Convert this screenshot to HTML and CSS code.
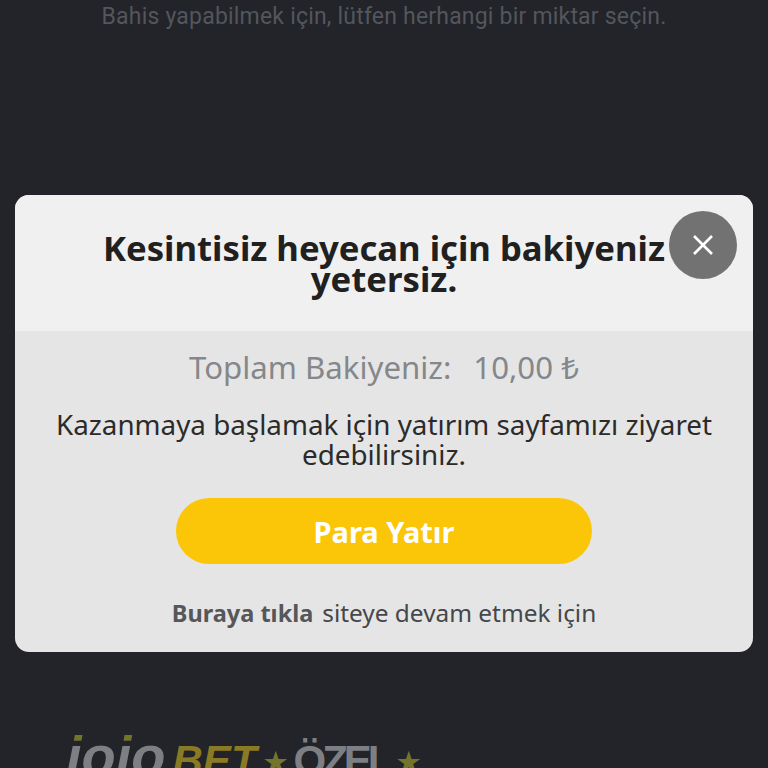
FILE: index.html

```html
<!DOCTYPE html>
<html lang="tr">
<head>
    <meta charset="UTF-8">
    <meta name="viewport" content="width=device-width, initial-scale=1.0">
    <title>Bakiye</title>
    <link rel="stylesheet" href="styles.css">
</head>
<body>
    <p class="hint">Bahis yapabilmek için, lütfen herhangi bir miktar seçin.</p>
    <div class="modal">
        <div class="modal-head">
            <h2>Kesintisiz heyecan için bakiyeniz yetersiz.</h2>
            <button class="close" type="button" aria-label="Kapat">
                <svg width="22" height="22" viewBox="0 0 22 22">
                    <path d="M2 2 L20 20 M20 2 L2 20" stroke="#fff" stroke-width="2.6" fill="none"/>
                </svg>
            </button>
        </div>
        <div class="modal-body">
            <div class="balance"><span>Toplam Bakiyeniz:</span><span>10,00 ₺</span></div>
            <p class="message">Kazanmaya başlamak için yatırım sayfamızı ziyaret edebilirsiniz.</p>
            <a class="deposit" href="#">Para Yatır</a>
            <p class="skip"><b>Buraya tıkla</b><span>siteye devam etmek için</span></p>
        </div>
    </div>
    <div class="logo">
        <span class="logo-jojo">jojo</span>
        <span class="logo-gold">BET</span>
        <span class="star">★</span>
        <span class="logo-ozel">ÖZEL</span>
        <span class="star">★</span>
    </div>
</body>
</html>
```

FILE: styles.css

```css
html, body {
    height: 768px;
    overflow: hidden;
}
body {
    background-color: #222429;
    font-family: "Noto Sans", sans-serif;
    margin: 0;
    display: flex;
    flex-direction: column;
    align-items: center;
}
.hint {
    font-family: Roboto, sans-serif;
    font-size: 23px;
    line-height: 30px;
    color: #53565c;
    margin: 0;
    height: 195px;
    flex-shrink: 0;
    padding-top: 2px;
    box-sizing: border-box;
    letter-spacing: 0.2px;
}
.modal {
    width: 738px;
    height: 457px;
    border-radius: 14px;
    overflow: hidden;
    background-color: #e5e5e5;
    display: flex;
    flex-direction: column;
    flex-shrink: 0;
}
.modal-head {
    position: relative;
    height: 136px;
    box-sizing: border-box;
    background-color: #f0f0f0;
    padding: 37px 60px 0;
}
.modal-head h2 {
    margin: 0;
    font-size: 34.7px;
    line-height: 31px;
    font-weight: 700;
    color: #202020;
    text-align: center;
}
.close {
    position: absolute;
    top: 16px;
    right: 16px;
    width: 68px;
    height: 68px;
    border: 0;
    border-radius: 50%;
    background-color: #727272;
    display: flex;
    align-items: center;
    justify-content: center;
    padding: 0;
}
.modal-body {
    display: flex;
    flex-direction: column;
    align-items: center;
    padding-top: 14px;
}
.balance {
    display: flex;
    gap: 22px;
    font-size: 31.2px;
    line-height: 44px;
    color: #85878a;
}
.message {
    margin: 20px 0 0;
    padding: 0 30px;
    font-size: 27.8px;
    line-height: 30px;
    color: #2b2b2b;
    text-align: center;
}
.deposit {
    margin-top: 29px;
    width: 416px;
    height: 66px;
    border-radius: 33px;
    background-color: #fbc508;
    color: #fff;
    font-size: 29px;
    font-weight: 700;
    display: flex;
    align-items: center;
    justify-content: center;
    text-decoration: none;
}
.skip {
    margin: 32px 0 0;
    font-size: 24.4px;
    line-height: 34px;
    color: #45474a;
    display: flex;
    gap: 9px;
}
.skip b {
    font-size: 23.5px;
    color: #55575a;
}
.logo {
    margin-top: 74px;
    flex-shrink: 0;
    align-self: flex-start;
    margin-left: 66px;
    display: flex;
    align-items: baseline;
    gap: 7px;
    font-family: "Liberation Sans", sans-serif;
    font-size: 42px;
    font-weight: 700;
    font-style: italic;
    line-height: 60px;
    white-space: nowrap;
}
.logo-jojo {
    font-size: 56px;
    background: linear-gradient(#74752c 33%, #7e7f82 33%);
    -webkit-background-clip: text;
    background-clip: text;
    color: transparent;
}
.logo-ozel {
    color: #7e7f82;
    letter-spacing: -4px;
    font-style: normal;
}
.logo-gold {
    color: #8a7a24;
}
.star {
    color: #74752c;
    font-size: 26px;
    font-style: normal;
    transform: translateY(-4px);
}
```
